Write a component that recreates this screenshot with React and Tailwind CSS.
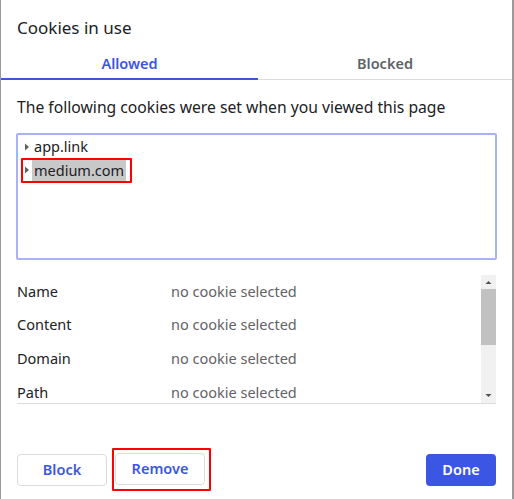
const rows = ["Name", "Content", "Domain", "Path"];

function Caret() {
  return (
    <svg width="6" height="8" viewBox="0 0 6 8" className="shrink-0">
      <path d="M1 0.5 L5 4 L1 7.5 Z" fill="#5f6368" />
    </svg>
  );
}

export default function App() {
  return (
    <div
      className="flex h-[499px] w-[514px] bg-[#9a9a9a] text-[#202124]"
      style={{ fontFamily: '"Noto Sans", "Open Sans", sans-serif' }}
    >
      <div className="ml-px mr-[2px] flex flex-1 flex-col bg-white">
        <h1 className="px-4 pt-[16px] text-[17px] leading-[24px]">Cookies in use</h1>

        <div className="mt-[13px] flex border-b border-[#dadce0] text-[14.5px] font-semibold">
          <div className="-mb-px w-[257px] border-b-2 border-[#3b56e5] pb-[3px] text-center text-[#3b56e5]">
            Allowed
          </div>
          <div className="flex-1 pb-[4px] text-center text-[#5f6368]">Blocked</div>
        </div>

        <p className="mt-[16px] px-4 text-[15.7px] leading-[22px]">
          The following cookies were set when you viewed this page
        </p>

        <div className="mx-[15px] mt-[15px] h-[127px] rounded-[2px] border-2 border-[#a9b3f1] pt-px text-[14.5px]">
          <div className="flex h-[22px] items-center gap-[4px] pl-[6px]">
            <Caret />
            <span>app.link</span>
          </div>
          <div className="ml-[3px] inline-flex items-center rounded-[1px] border-2 border-[#ff0000] pl-px pr-[4px] py-0">
            <Caret />
            <span className="ml-[2px] bg-[#c8c8c8] pl-[2px] pr-[2px] leading-[21px] my-0">
              medium.com
            </span>
          </div>
        </div>

        <div className="mx-4 mt-[15px] flex h-[129px] overflow-hidden border-b border-[#dadce0]">
          <div className="flex flex-1 flex-col text-[14.5px]">
            {rows.map((r) => (
              <div key={r} className="flex h-[33.7px] shrink-0 items-center">
                <span className="w-[154px]">{r}</span>
                <span className="text-[#5f6368]">no cookie selected</span>
              </div>
            ))}
          </div>
          <div className="flex w-[15px] flex-col items-center bg-[#f1f1f1]">
            <svg width="15" height="14" viewBox="0 0 15 14">
              <path d="M4.5 9 L7.5 6 L10.5 9 Z" fill="#505050" />
            </svg>
            <div className="h-[56px] w-[15px] bg-[#c1c1c1]" />
            <div className="flex-1" />
            <svg width="15" height="14" viewBox="0 0 15 14">
              <path d="M4.5 5 L7.5 8 L10.5 5 Z" fill="#505050" />
            </svg>
          </div>
        </div>

        <div className="mt-auto flex items-center px-4 pb-[8px] text-[14.5px] font-semibold">
          <button className="h-[32px] w-[90px] rounded-[4px] border border-[#dadce0] text-[#3b56e5]">
            Block
          </button>
          <div className="ml-[5px] rounded-[1px] border-2 border-[#ff0000] pb-[4px] pl-px pr-[4px] pt-[3px]">
            <button className="h-[32px] w-[90px] rounded-[4px] border border-[#dadce0] text-[#3b56e5]">
              Remove
            </button>
          </div>
          <button className="ml-auto h-[32px] w-[70px] rounded-[4px] bg-[#3b56e5] text-white">
            Done
          </button>
        </div>
      </div>
    </div>
  );
}
